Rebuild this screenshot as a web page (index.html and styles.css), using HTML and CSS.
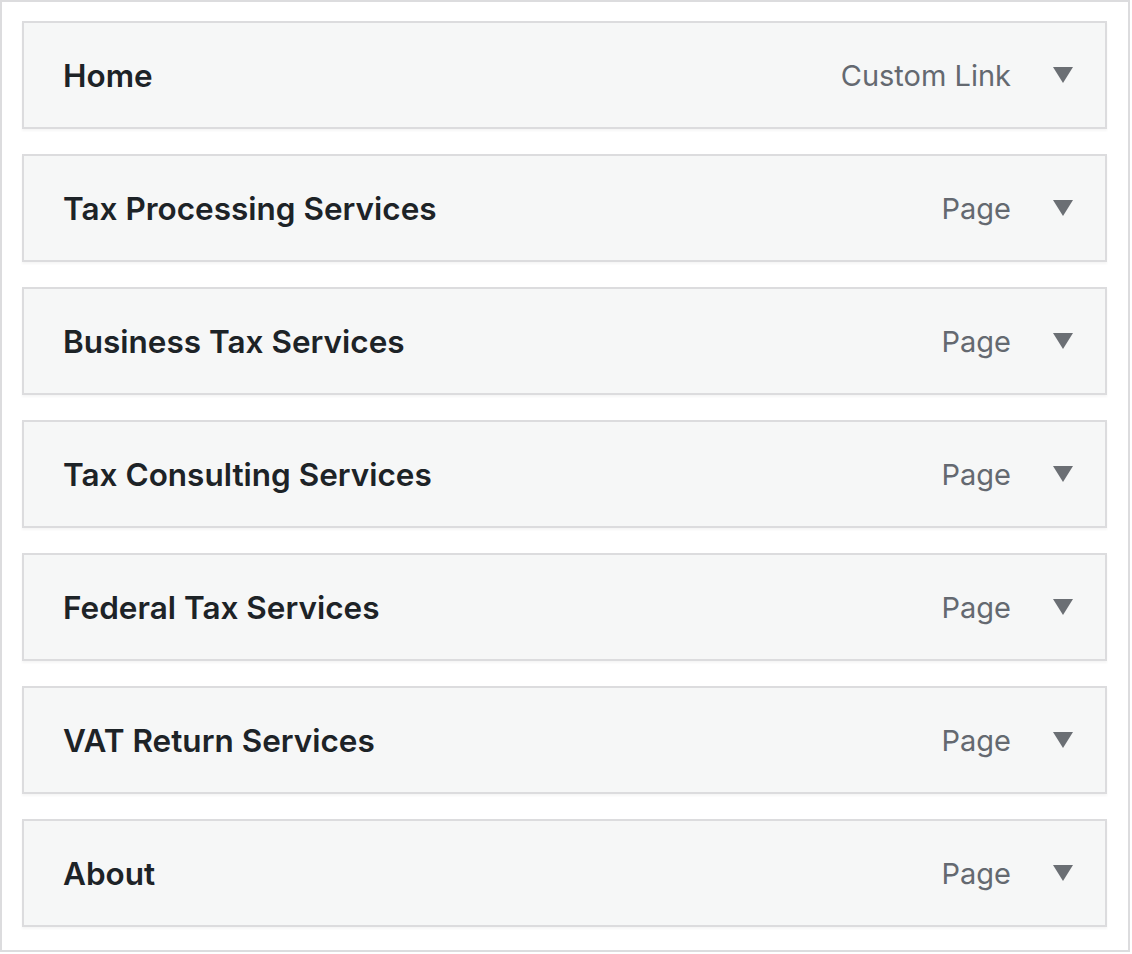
FILE: index.html
```html
<!DOCTYPE html>
<html>
<head>
    <meta name="viewport" content="width=device-width, initial-scale=1.0">
    <title>Menu Structure</title>
    <link rel="stylesheet" href="styles.css">
</head>
<body>
    <div class="menu-frame">
        <ul class="menu">
            <li class="menu-item">
                <span class="item-title">Home</span>
                <span class="item-type">Custom Link</span>
                <span class="item-toggle"></span>
            </li>
            <li class="menu-item">
                <span class="item-title">Tax Processing Services</span>
                <span class="item-type">Page</span>
                <span class="item-toggle"></span>
            </li>
            <li class="menu-item">
                <span class="item-title">Business Tax Services</span>
                <span class="item-type">Page</span>
                <span class="item-toggle"></span>
            </li>
            <li class="menu-item">
                <span class="item-title">Tax Consulting Services</span>
                <span class="item-type">Page</span>
                <span class="item-toggle"></span>
            </li>
            <li class="menu-item">
                <span class="item-title">Federal Tax Services</span>
                <span class="item-type">Page</span>
                <span class="item-toggle"></span>
            </li>
            <li class="menu-item">
                <span class="item-title">VAT Return Services</span>
                <span class="item-type">Page</span>
                <span class="item-toggle"></span>
            </li>
            <li class="menu-item">
                <span class="item-title">About</span>
                <span class="item-type">Page</span>
                <span class="item-toggle"></span>
            </li>
        </ul>
    </div>
</body>
</html>
```

FILE: styles.css
```css
body {
    margin: 0;
    padding: 0;
    background: #fff;
    font-family: Inter, "Noto Sans", sans-serif;
}
.menu-frame {
    width: 1130px;
    height: 952px;
    box-sizing: border-box;
    border: 2px solid #dcdcde;
    padding: 19px 21px 0 20px;
}
.menu {
    list-style: none;
    margin: 0;
    padding: 0;
    display: flex;
    flex-direction: column;
    gap: 25px;
}
.menu-item {
    height: 108px;
    box-sizing: border-box;
    display: flex;
    align-items: center;
    padding: 0 32px 0 40px;
    background: #f6f7f7;
    border: 2px solid #dcdcde;
    box-shadow: 0 2px 2px rgba(0, 0, 0, .04);
}
.item-title {
    flex: 1;
    font-size: 31.5px;
    font-weight: 600;
    color: #1d2327;
    margin-left: -1px;
}
.item-type {
    font-size: 29px;
    color: #646970;
    margin-right: 42px;
}
.item-toggle {
    width: 0;
    height: 0;
    border-left: 10px solid transparent;
    border-right: 10px solid transparent;
    border-top: 16px solid #6b6f74;
}
```
